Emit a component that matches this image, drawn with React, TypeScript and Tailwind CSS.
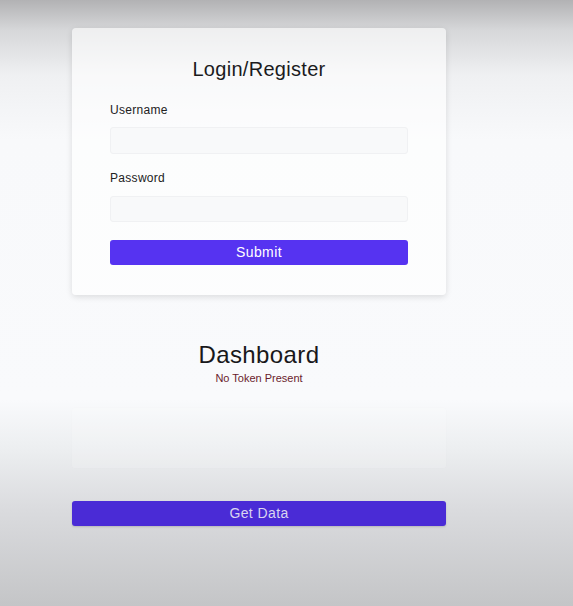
import { useState } from 'react';

export default function App() {
  const [username, setUsername] = useState('');
  const [password, setPassword] = useState('');

  return (
    <div
      className="min-h-[606px] w-full bg-[linear-gradient(to_bottom,#b2b2b4_0px,#d6d7d9_30px,#eff0f2_75px,#f8f9fb_140px,#f9fafc_400px,#eceef0_450px,#dadbde_510px,#c4c5c7_606px)] pl-[72px] pt-[28px]"
      style={{ fontFamily: '"Liberation Sans", Arial, sans-serif' }}
    >
      <div className="flex w-[374px] flex-col">
        {/* Login card */}
        <div className="flex flex-col rounded-[4px] bg-white/60 px-[38px] pt-7 pb-[30px] shadow-[0_2px_6px_rgba(0,0,0,0.12)]">
          <h2 className="text-center text-[20px] leading-[26px] tracking-[0.3px] text-[#1b1b1d]">
            Login/Register
          </h2>

          <label className="mt-5 text-[12px] leading-[16px] tracking-[0.3px] text-[#222]">
            Username
          </label>
          <input
            value={username}
            onChange={(e) => setUsername(e.target.value)}
            className="mt-[9px] h-[27px] rounded-[3px] border border-[#f0f1f3] bg-[#f8f9fa] px-2 text-[12px] outline-none"
          />

          <label className="mt-4 text-[12px] leading-[16px] tracking-[0.3px] text-[#222]">
            Password
          </label>
          <input
            type="password"
            value={password}
            onChange={(e) => setPassword(e.target.value)}
            className="mt-[10px] h-[26px] rounded-[3px] border border-[#f0f1f3] bg-[#f8f9fa] px-2 text-[12px] outline-none"
          />

          <button className="mt-[18px] h-[25px] rounded-[3px] bg-[#5633f1] text-[14px] tracking-[0.4px] text-white">
            Submit
          </button>
        </div>

        {/* Dashboard */}
        <h2 className="mt-[45px] text-center text-[24px] leading-[30px] tracking-[0.4px] text-[#18181a]">
          Dashboard
        </h2>
        <p className="mt-[1px] text-center text-[11px] leading-[14px] text-[#6a1c2c]">
          No Token Present
        </p>

        <div className="mt-[23px] h-[60px] rounded-[3px] bg-white/15 shadow-[0_0_2px_rgba(0,0,0,0.02)]"></div>

        <button className="mt-[33px] h-[25px] rounded-[3px] bg-[#4a2bd6] text-[14px] tracking-[0.4px] text-[#d9d5f0] shadow-[0_1px_2px_rgba(0,0,0,0.15)]">
          Get Data
        </button>
      </div>
    </div>
  );
}
